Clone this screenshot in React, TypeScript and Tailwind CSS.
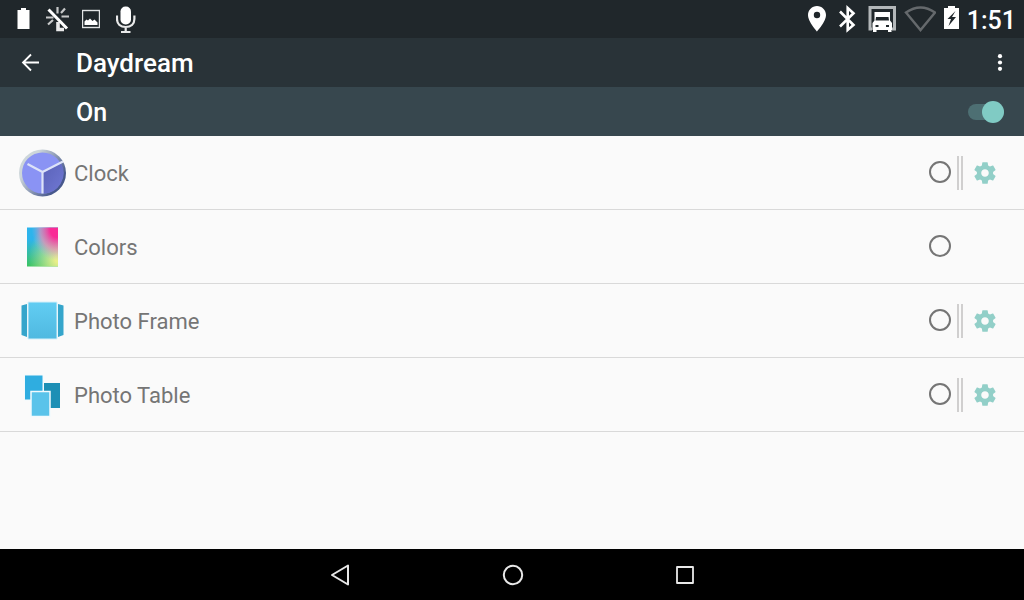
import type { ReactNode } from "react";

interface DreamProps {
  id: string;
  name: string;
  icon: ReactNode;
  hasSettings?: boolean;
}

const StatusBar = () => {
  return (
    <div className="flex h-[38px] items-center justify-between bg-[#20272b] pl-4 pr-2 text-white">
      <div className="flex items-center">
        <svg width="14" height="38" viewBox="16 0 14 38" fill="currentColor">
          <path d="M21 8h5v2h3.500v19H17.500V10H21z" />
        </svg>
        <svg className="ml-4" width="24" height="38" viewBox="46 0 24 38" fill="none" stroke="currentColor">
          <g strokeWidth="2.2" opacity="0.75">
            <path d="M57.500 7v6.500M65 8.500L61 13M61.500 16.500H69M46 17.500h7.500M53 20l-5 4.500" />
          </g>
          <path d="M58 22v7.500h6" strokeWidth="3.6" opacity="0.9" />
          <path d="M48.500 9.500L67 28.500" strokeWidth="3" />
        </svg>
        <svg className="ml-3" width="18" height="38" viewBox="82 0 18 38">
          <rect x="82.5" y="10.5" width="17" height="17" fill="none" stroke="#e2e4e5" strokeWidth="1.4" />
          <path d="M84.500 25v-3.500l2-2 1.500 1 2-2 2.500 2.500 2-1.500 3 3V25z" fill="currentColor" />
        </svg>
        <svg className="ml-4" width="20" height="38" viewBox="116 0 20 38" fill="none" stroke="currentColor">
          <rect x="120.5" y="6.5" width="10.5" height="18" rx="5" fill="currentColor" stroke="none" />
          <path d="M117 15.500v3.500c0 5 3.500 8 8.700 8s8.700-3 8.700-8v-3.500M125.700 27v5M121 32h9.500" strokeWidth="2.2" opacity="0.9" />
        </svg>
      </div>
      <div className="flex items-center">
        <svg width="18" height="38" viewBox="808 0 18 38" fill="currentColor">
          <path fillRule="evenodd" d="M817 6c-5 0-9 4-9 9 0 6.700 9 16.500 9 16.500s9-9.800 9-16.500c0-5-4-9-9-9zm0 12.200a3.200 3.200 0 1 1 0-6.400 3.200 3.200 0 0 1 0 6.400z" />
        </svg>
        <svg className="ml-3" width="18" height="38" viewBox="838 0 18 38" fill="none" stroke="currentColor" strokeWidth="2.6">
          <path d="M840 11.500l13.500 13.500-5.800 5V8l5.800 5.200L840 26.500" />
        </svg>
        <svg className="ml-3" width="28" height="38" viewBox="868 0 28 38">
          <path d="M872 29H870V7.500h24.500V29H892" fill="none" stroke="#b3b7b9" strokeWidth="3" />
          <path
            fill="#fff"
            fillRule="evenodd"
            d="M874.500 12h15.500v8.500l2 2.500v7h-.5v2H888v-2h-11.500v2H873v-2h-.5v-7l2-2.500zm1.500 5l-.5 3.500h13.500l-.5-3.500zM875.500 25v2h3v-2zm10.500 0v2h3v-2z"
          />
        </svg>
        <svg className="ml-2" width="32" height="38" viewBox="904 0 32 38" fill="none">
          <path d="M906 12.500q14.500-10 29 0L920.500 30z" stroke="#65696c" strokeWidth="2.4" />
        </svg>
        <svg className="ml-2" width="15" height="38" viewBox="944 0 15 38" fill="currentColor">
          <path fillRule="evenodd" d="M948 6h7v2h4v21h-15V8h4zM955.500 11l-8 8h3.500l-2.500 7 7.500-9h-4z" />
        </svg>
        <span className="ml-2 pt-1 text-[25px] font-medium leading-8">1:51</span>
      </div>
    </div>
  );
};

const AppBar = () => {
  return (
    <header className="flex h-[49px] items-center bg-[#293338] pl-5 pr-3 text-white">
      <button type="button" aria-label="Navigate up" className="mr-9 flex h-10 w-5 items-center justify-center">
        <svg width="20" height="20" viewBox="0 0 20 20" fill="none" stroke="currentColor" strokeWidth="1.8">
          <path d="M19 9.500H3M11 1.500l-8 8 8 8" />
        </svg>
      </button>
      <h1 className="flex-1 text-[26px] font-medium leading-8">Daydream</h1>
      <button type="button" aria-label="More options" className="flex h-10 w-6 items-center justify-center">
        <svg width="6" height="20" viewBox="0 0 6 20" fill="currentColor">
          <circle cx="3" cy="3.2" r="2.1" />
          <circle cx="3" cy="9.5" r="2.1" />
          <circle cx="3" cy="15.8" r="2.1" />
        </svg>
      </button>
    </header>
  );
};

const SwitchBar = () => {
  return (
    <div className="flex h-[49px] items-center justify-between bg-[#37474e] pl-[76px] pr-5 text-white">
      <label htmlFor="daydream" className="pt-0.5 text-[25px] font-medium leading-8">
        On
      </label>
      <input
        id="daydream"
        type="checkbox"
        role="switch"
        defaultChecked
        className="relative h-4 w-9 appearance-none rounded-full bg-[#4d6f73] before:absolute before:-top-[3px] before:left-0 before:size-[22px] before:rounded-full before:bg-gray-300 checked:before:left-auto checked:before:right-0 checked:before:bg-[#80cbc4]"
      />
    </div>
  );
};

const ClockIcon = () => (
  <svg width="48" height="48" viewBox="0 0 48 48" fill="none">
    <defs>
      <linearGradient id="rim" x1="0" y1="0" x2="1" y2="0.7">
        <stop offset="0.3" stopColor="#cdd6da" />
        <stop offset="0.9" stopColor="#47588c" />
      </linearGradient>
      <linearGradient id="shade" x1="0" y1="0" x2="1" y2="1">
        <stop stopColor="#5a62b8" />
        <stop offset="1" stopColor="#7078d4" />
      </linearGradient>
    </defs>
    <circle cx="24.5" cy="24" r="23.5" fill="url(#rim)" />
    <circle cx="24.5" cy="24" r="20.5" fill="#8a93f4" />
    <path d="M24.500 24L43 14a20.500 20.500 0 0 1-18.500 30.500z" fill="url(#shade)" />
    <path d="M9.500 15l15 8L45 12.500M24.500 23v21.500" stroke="#dde3f8" strokeWidth="2.2" />
  </svg>
);

const ColorsIcon = () => (
  <svg width="48" height="48" viewBox="0 0 48 48">
    <defs>
      <linearGradient id="base" x1="0.1" y1="0" x2="0" y2="1">
        <stop offset="0.3" stopColor="#2db4ec" />
        <stop offset="1" stopColor="#3cc45f" />
      </linearGradient>
      <radialGradient id="pink" cx="0.95" cy="0.05" r="0.8">
        <stop offset="0.25" stopColor="#f92a96" />
        <stop offset="0.65" stopColor="#e58ab8" stopOpacity="0.7" />
        <stop offset="1" stopColor="#9cb0e0" stopOpacity="0" />
      </radialGradient>
      <radialGradient id="yellow" cx="1" cy="0.8" r="0.95">
        <stop offset="0.1" stopColor="#e9ef88" />
        <stop offset="1" stopColor="#d0ee90" stopOpacity="0" />
      </radialGradient>
    </defs>
    <path d="M9 4.500h31v39H9z" fill="url(#base)" />
    <path d="M9 4.500h31v39H9z" fill="url(#yellow)" />
    <path d="M9 4.500h31v39H9z" fill="url(#pink)" />
  </svg>
);

const PhotoFrameIcon = () => (
  <svg width="48" height="48" viewBox="0 0 48 48">
    <defs>
      <linearGradient id="sky" x1="0" y1="0" x2="0" y2="1">
        <stop stopColor="#62cdf3" />
        <stop offset="1" stopColor="#4fb9e0" />
      </linearGradient>
    </defs>
    <path d="M3.500 8.500L9 7v33l-5.500-2zM45.500 8.500L40 7v33l5.500-2z" fill="#35a5cb" />
    <path d="M10 5h29v37H10z" fill="url(#sky)" stroke="#d5f0fa" strokeWidth="1" />
  </svg>
);

const PhotoTableIcon = () => (
  <svg width="48" height="48" viewBox="0 0 48 48">
    <path d="M26 12h16v25H26z" fill="#1d8fb5" />
    <path d="M6.500 4H25v25H6.500z" fill="#2fade0" stroke="#f2fafd" strokeWidth="1" />
    <path d="M13 20.500h19v25H13z" fill="#5ac3ea" stroke="#f2fafd" strokeWidth="1.5" />
  </svg>
);

const Dream = ({ id, name, icon, hasSettings }: DreamProps) => {
  return (
    <li className="flex h-[74px] items-center border-b border-[#d9d9d9] pl-[18px] pr-[26px]">
      {icon}
      <label htmlFor={id} className="ml-2 flex-1 pt-0.5 text-[22px] leading-8 text-[#757575]">
        {name}
      </label>
      <input
        id={id}
        type="radio"
        name="dream"
        className="mb-px size-[22px] appearance-none rounded-full border-2 border-[#757575] checked:border-[6px]"
      />
      <div className="ml-[6px] flex w-[41px] items-center justify-between">
        {hasSettings && (
          <>
            <span className="h-[34px] w-[6px] border-x-2 border-[#d0cfcf]" />
            <button type="button" aria-label={`${name} settings`}>
              <svg width="26" height="26" viewBox="0 0 24 24" fill="#92cfc8">
                <path d="M19.430 12.980c.04-.32.07-.64.07-.98s-.03-.66-.07-.98l2.110-1.650c.19-.15.24-.42.12-.64l-2-3.460c-.12-.22-.39-.3-.61-.22l-2.490 1c-.52-.4-1.080-.73-1.690-.98l-.38-2.650C14.460 2.180 14.250 2 14 2h-4c-.25 0-.46.18-.49.42l-.38 2.650c-.61.25-1.170.59-1.690.98l-2.490-1c-.23-.09-.49 0-.61.22l-2 3.460c-.13.22-.07.49.12.64l2.110 1.650c-.04.32-.07.65-.07.98s.03.66.07.98l-2.110 1.650c-.19.15-.24.42-.12.64l2 3.460c.12.22.39.3.61.22l2.490-1c.52.4 1.080.73 1.690.98l.38 2.650c.03.24.24.42.49.42h4c.25 0 .46-.18.49-.42l.38-2.650c.61-.25 1.170-.59 1.690-.98l2.490 1c.23.09.49 0 .61-.22l2-3.460c.12-.22.07-.49-.12-.64l-2.110-1.650zM12 15.500c-1.930 0-3.500-1.570-3.500-3.500s1.570-3.500 3.500-3.500 3.500 1.570 3.500 3.500-1.570 3.500-3.500 3.500z" />
              </svg>
            </button>
          </>
        )}
      </div>
    </li>
  );
};

const NavBar = () => {
  return (
    <nav className="flex h-[51px] items-center justify-center gap-[148px] bg-black pl-0.5 text-[#e8e8e8]">
      <button type="button" aria-label="Back">
        <svg width="24" height="24" viewBox="0 0 24 24" fill="none" stroke="currentColor" strokeWidth="2" strokeLinejoin="round">
          <path d="M19 2.500v19L3 12z" />
        </svg>
      </button>
      <button type="button" aria-label="Home">
        <svg width="24" height="24" viewBox="0 0 24 24" fill="none" stroke="currentColor" strokeWidth="2">
          <circle cx="12" cy="12" r="9.2" />
        </svg>
      </button>
      <button type="button" aria-label="Overview">
        <svg width="24" height="24" viewBox="0 0 24 24" fill="none" stroke="currentColor" strokeWidth="1.8" strokeLinejoin="round">
          <path d="M4 4h16v16H4z" />
        </svg>
      </button>
    </nav>
  );
};

function App() {
  return (
    <div className="flex min-h-screen flex-col bg-[#fafafa] font-[Roboto,sans-serif]">
      <StatusBar />
      <AppBar />
      <SwitchBar />
      <main className="flex-1">
        <ul>
          <Dream id="clock" name="Clock" icon={<ClockIcon />} hasSettings />
          <Dream id="colors" name="Colors" icon={<ColorsIcon />} />
          <Dream id="photo-frame" name="Photo Frame" icon={<PhotoFrameIcon />} hasSettings />
          <Dream id="photo-table" name="Photo Table" icon={<PhotoTableIcon />} hasSettings />
        </ul>
      </main>
      <NavBar />
    </div>
  );
}

export default App;
